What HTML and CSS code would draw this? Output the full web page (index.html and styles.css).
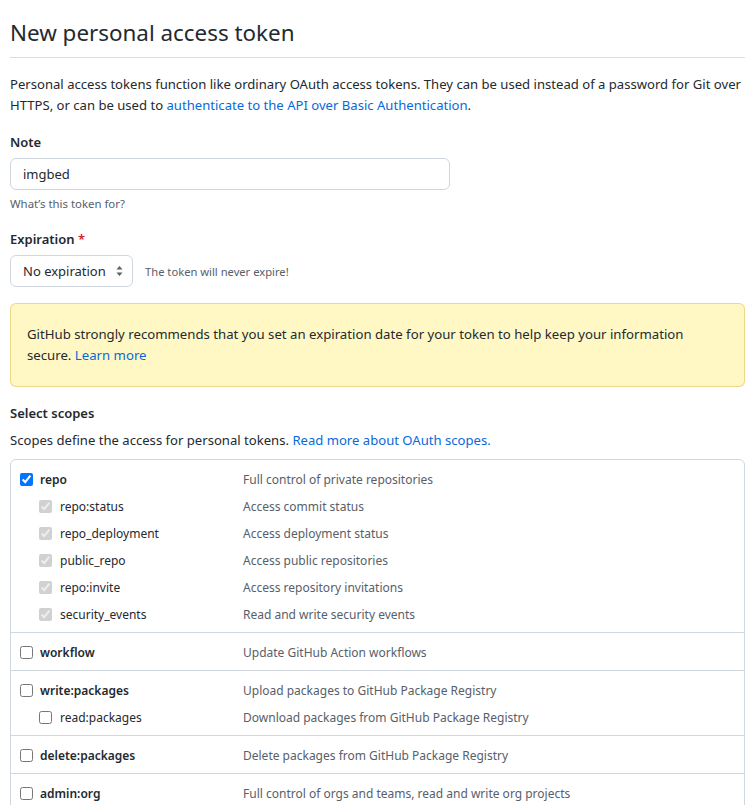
FILE: index.html
```html
<!DOCTYPE html>
<html lang="en">
<head>
<meta charset="utf-8">
<title>New personal access token</title>
<link rel="stylesheet" href="styles.css">
</head>
<body>
<div class="page">
  <div class="subhead"><h2 class="subhead-title">New personal access token</h2></div>
  <p class="intro">Personal access tokens function like ordinary OAuth access tokens. They can be used instead of a password for Git over HTTPS, or can be used to <a href="#">authenticate to the API over Basic Authentication</a>.</p>

  <div class="form-group">
    <div class="label">Note</div>
    <div class="input">imgbed</div>
    <div class="note">What’s this token for?</div>
  </div>

  <div class="form-group">
    <div class="label">Expiration <span class="req">*</span></div>
    <div class="select-row">
      <div class="select"><span>No expiration</span>
        <svg class="arrows" width="7" height="12" viewBox="0 0 7 12"><path d="M3.5 1 L6.5 4.6 H0.5 Z M3.5 11 L6.5 7.4 H0.5 Z" fill="#57606a"/></svg>
      </div>
      <span class="select-note">The token will never expire!</span>
    </div>
  </div>

  <div class="flash">GitHub strongly recommends that you set an expiration date for your token to help keep your information secure. <a href="#">Learn more</a></div>

  <div class="label scopes-title">Select scopes</div>
  <p class="scopes-desc">Scopes define the access for personal tokens. <a href="#">Read more about OAuth scopes.</a></p>

  <div class="scopes">
    <div class="group">
      <div class="row"><label class="name main"><input type="checkbox" checked>repo</label><span class="desc">Full control of private repositories</span></div>
      <div class="row"><label class="name sub"><input type="checkbox" checked disabled>repo:status</label><span class="desc">Access commit status</span></div>
      <div class="row"><label class="name sub"><input type="checkbox" checked disabled>repo_deployment</label><span class="desc">Access deployment status</span></div>
      <div class="row"><label class="name sub"><input type="checkbox" checked disabled>public_repo</label><span class="desc">Access public repositories</span></div>
      <div class="row"><label class="name sub"><input type="checkbox" checked disabled>repo:invite</label><span class="desc">Access repository invitations</span></div>
      <div class="row"><label class="name sub"><input type="checkbox" checked disabled>security_events</label><span class="desc">Read and write security events</span></div>
    </div>
    <div class="group">
      <div class="row"><label class="name main"><input type="checkbox">workflow</label><span class="desc">Update GitHub Action workflows</span></div>
    </div>
    <div class="group">
      <div class="row"><label class="name main"><input type="checkbox">write:packages</label><span class="desc">Upload packages to GitHub Package Registry</span></div>
      <div class="row"><label class="name sub"><input type="checkbox">read:packages</label><span class="desc">Download packages from GitHub Package Registry</span></div>
    </div>
    <div class="group">
      <div class="row"><label class="name main"><input type="checkbox">delete:packages</label><span class="desc">Delete packages from GitHub Package Registry</span></div>
    </div>
    <div class="group">
      <div class="row"><label class="name main"><input type="checkbox">admin:org</label><span class="desc">Full control of orgs and teams, read and write org projects</span></div>
    </div>
  </div>
</div>
</body>
</html>
```

FILE: styles.css
```css
html, body { margin: 0; padding: 0; background: #fff; }
body {
  font-family: "Noto Sans", "Open Sans", "Liberation Sans", sans-serif;
  font-size: 13.1px;
  line-height: 21px;
  color: #24292f;
  overflow: hidden;
  height: 805px;
}
a { color: #0969da; text-decoration: none; }
.page { padding: 15px 5px 0 10px; }
.subhead { border-bottom: 1px solid #d8dee4; padding-bottom: 6px; }
.subhead-title { margin: 0; font-size: 22.4px; line-height: 36px; font-weight: 400; }
.intro { margin: 16px 0 0; }
.form-group { margin-top: 16px; }
.label { font-weight: 600; font-size: 13px; margin-bottom: 5px; }
.req { color: #cf222e; }
.input {
  width: 440px; height: 32px; box-sizing: border-box;
  border: 1px solid #d0d7de; border-radius: 6px;
  padding: 0 12px; line-height: 30px; font-size: 13px;
}
.note { font-size: 11.4px; line-height: 18px; color: #57606a; margin-top: 5px; }
.select-row { display: flex; align-items: center; gap: 12px; }
.select {
  display: flex; align-items: center;
  height: 32px; box-sizing: border-box; width: 123px;
  border: 1px solid #d0d7de; border-radius: 6px;
  padding: 0 9px 0 12px; line-height: 30px; font-size: 13px;
  white-space: nowrap;
}
.arrows { flex: none; margin-left: auto; }
.select-note { font-size: 11.2px; color: #57606a; }
.flash {
  margin-top: 16px;
  font-size: 13.2px;
  background: #fff8c5; border: 1px solid rgba(212,167,44,0.4); border-radius: 6px;
  padding: 20px 16px;
}
.scopes-title { margin-top: 16px; margin-bottom: 0; }
.scopes-desc { margin: 6px 0 0; }
.scopes {
  margin-top: 8px;
  border: 1px solid #d0d7de; border-radius: 6px;
  font-size: 12px;
}
.group { padding: 6px 0 4px; border-top: 1px solid #d0d7de; }
.group:first-child { border-top: 0; padding-top: 6px; }
.row { display: flex; align-items: center; height: 27px; }
.name { display: flex; align-items: center; width: 223px; flex: none; }
.name.main { padding-left: 9px; font-weight: 600; }
.name.sub { padding-left: 28px; width: 204px; }
.name input { margin: 0 8px 0 0; width: 13px; height: 13px; }
.name.main input { margin-right: 7px; }
.desc { color: #57606a; }
```
